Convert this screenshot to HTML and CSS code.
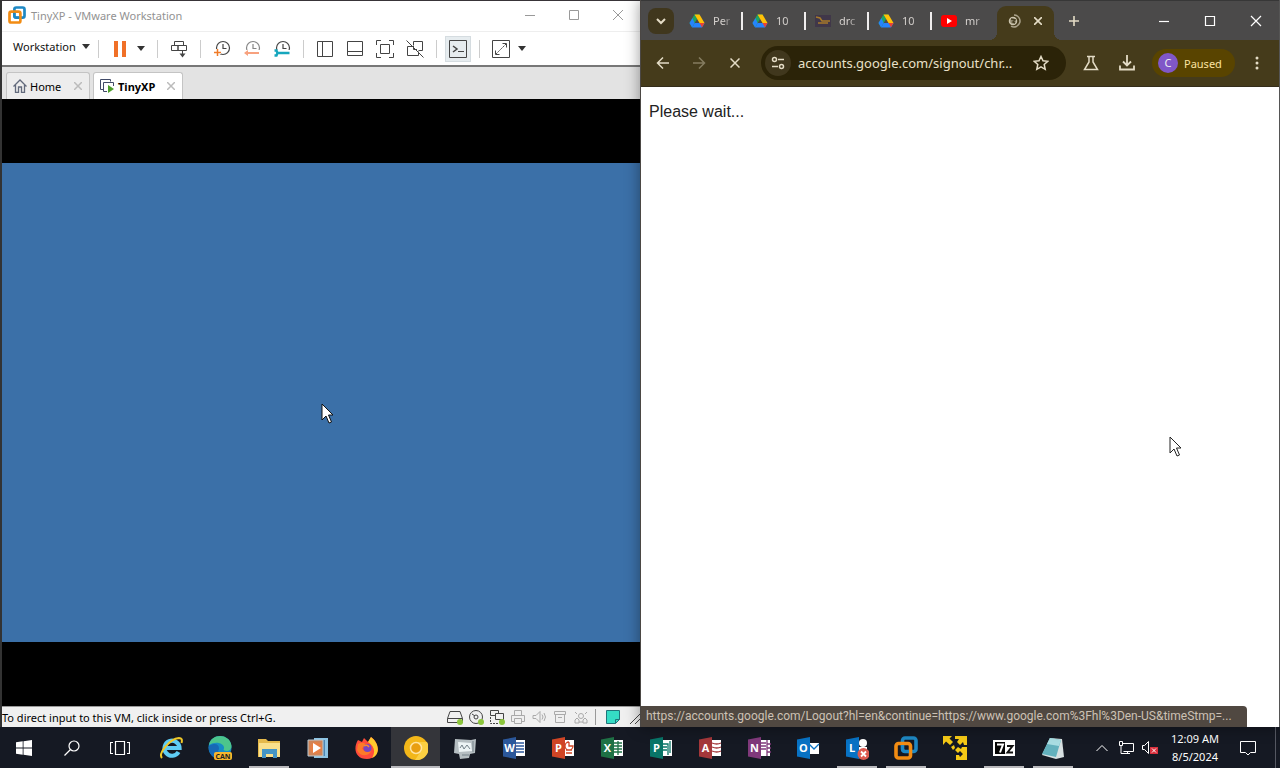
FILE: index.html
```html
<!DOCTYPE html>
<html lang="en">
<head>
<meta charset="utf-8">
<title>Desktop</title>
<link rel="stylesheet" href="styles.css">
</head>
<body>
<svg class="defs" aria-hidden="true">
  <symbol id="drive" viewBox="0 0 16 16"><path d="M5.500 1.500h5L8 6z" fill="#18a05a"/><path d="M5.500 1.500L.500 10l2.600 4.500L8 6z" fill="#1da463"/><path d="M10.500 1.500L15.500 10h-5L5.500 1.500z" fill="#ffc107"/><path d="M3.100 14.500L5.600 10h10l-2.600 4.500z" fill="#2684fc"/><path d="M.500 10l2.600 4.500L5.600 10 3.500 5z" fill="#2684fc"/><path d="M10.500 10h5L13 14.500z" fill="#ea4335"/></symbol>
  <symbol id="vmware" viewBox="0 0 24 24"><rect x="8.500" y="2" width="13.500" height="13.500" rx="2.500" fill="none" stroke="#1e88c4" stroke-width="3.600"/><rect x="2" y="7.500" width="14.500" height="14.500" rx="2.500" fill="none" stroke="#f28c13" stroke-width="3.600"/><path d="M8.500 9V13a2.500 2.500 0 0 0 2.500 2.500h4" fill="none" stroke="#1e88c4" stroke-width="3"/></symbol>
  <symbol id="clock" viewBox="0 0 18 18"><circle cx="10" cy="8" r="6.500" fill="none" stroke="currentColor" stroke-width="1.200"/><path d="M10 4v4.500h3.500" fill="none" stroke="currentColor" stroke-width="1.200"/></symbol>
  <symbol id="office-page" viewBox="0 0 24 24"><path d="M13 4h10v16H13z" fill="#fff"/></symbol>
  <symbol id="office-book" viewBox="0 0 24 24"><path d="M1 3.500L14 1v22L1 20.500z" fill="currentColor"/></symbol>
</svg>

<main class="desktop">
  <section class="window vm" aria-label="TinyXP - VMware Workstation">
    <header class="vm-title">
      <svg class="i18" viewBox="0 0 24 24"><use href="#vmware"/></svg>
      <h1>TinyXP - VMware Workstation</h1>
      <div class="caption">
        <button aria-label="Minimize"><svg class="i12" viewBox="0 0 12 12"><path d="M1 6.500h10"/></svg></button>
        <button aria-label="Maximize"><svg class="i12" viewBox="0 0 12 12"><path d="M1.500 1.500h9v9h-9z"/></svg></button>
        <button aria-label="Close"><svg class="i12" viewBox="0 0 12 12"><path d="M1 1l10 10M11 1L1 11"/></svg></button>
      </div>
    </header>
    <nav class="vm-tools">
      <button class="menu">Workstation <svg class="caret" viewBox="0 0 8 5"><path d="M0 0h8L4 5z"/></svg></button>
      <span class="sep"></span>
      <button class="tool" aria-label="Suspend"><svg class="i18" viewBox="0 0 18 18"><path d="M3 1h4v16H3zM11 1h4v16h-4z" fill="#f07028" stroke="none"/></svg></button>
      <button class="drop" aria-label="Power options"><svg class="caret" viewBox="0 0 8 5"><path d="M0 0h8L4 5z"/></svg></button>
      <span class="sep"></span>
      <button class="tool" aria-label="Send Ctrl+Alt+Del"><svg class="i18" viewBox="0 0 18 18"><path d="M4.500 5.500v-4h9v4M1.500 5.500h6.500v5h-6.500zM8 5.500h8.500v5H8zM12.500 10.500v4"/><path d="M9.500 13.500h6l-3 4z" fill="#444" stroke="none"/></svg></button>
      <span class="sep"></span>
      <button class="tool" aria-label="Take snapshot"><svg class="i18" viewBox="0 0 18 18"><use href="#clock"/><path d="M1 12.500h7M4.500 9v7" stroke="#fff" stroke-width="3"/><path d="M1 12.500h7M4.500 9v7" stroke="#ef7b28" stroke-width="1.500"/></svg></button>
      <button class="tool faded" aria-label="Revert snapshot"><svg class="i18" viewBox="0 0 18 18"><use href="#clock"/><path d="M1 13h16" stroke="#fff" stroke-width="6"/><path d="M5 10l-4 3 4 3v-2h11v-2H5z" fill="#f3703a" stroke="none"/></svg></button>
      <button class="tool" aria-label="Manage snapshots"><svg class="i18" viewBox="0 0 18 18"><use href="#clock"/><path d="M1 13h16" stroke="#fff" stroke-width="6"/><path d="M1.500 10.500h2l1 2.500-1 2.500h-2M4.500 13H16.500" stroke="#16a6bd" stroke-width="2.400"/></svg></button>
      <span class="sep"></span>
      <button class="tool" aria-label="Library"><svg class="i18" viewBox="0 0 18 18"><path d="M1.500 1.500h15v15h-15zM6.500 1.500v15"/></svg></button>
      <button class="tool" aria-label="Thumbnail bar"><svg class="i18" viewBox="0 0 18 18"><path d="M1.500 1.500h15v14h-15zM1.500 11.500h15"/></svg></button>
      <button class="tool" aria-label="Full screen"><svg class="i18" viewBox="0 0 18 18"><path d="M5 .500H.500V5M13 .500h4.500V5M5 17.500H.500V13M13 17.500h4.500V13M4.500 4.500h9v9h-9z"/></svg></button>
      <button class="tool" aria-label="Unity"><svg class="i18" viewBox="0 0 18 18"><path d="M7.500 5.500v-4h9v9h-4M6 6.500H1.500v9h11v-4M7.500 6v3.500H11M.500 .500l17 17"/></svg></button>
      <span class="sep"></span>
      <button class="tool" aria-label="Console view" aria-pressed="true"><svg class="i18" viewBox="0 0 18 18"><path d="M.500 .500h17v17H.500zM9 11.500h6"/><path d="M4 6l4 3-4 3" stroke-width="1.500"/></svg></button>
      <span class="sep"></span>
      <button class="tool" aria-label="Stretch guest"><svg class="i18" viewBox="0 0 18 18"><path d="M.500 .500h17v17H.500z"/><path d="M10.500 3.500h4v4M3.500 10.500v4h4"/><path d="M14 4L4 14" stroke-dasharray="2 1"/></svg></button>
      <button class="drop" aria-label="Stretch options"><svg class="caret" viewBox="0 0 8 5"><path d="M0 0h8L4 5z"/></svg></button>
    </nav>
    <div class="vm-tabs">
      <div class="vm-tab">
        <svg class="i14" viewBox="0 0 14 14"><path d="M.500 7.500L7 1l6.500 6.500M2.500 6v7.500h3V8h3v5.500h3V6" fill="none" stroke="#626a7c" stroke-width="1.300"/></svg>
        <a href="#home">Home</a>
        <button aria-label="Close Home"><svg class="i8" viewBox="0 0 8 8"><path d="M0 0l8 8M8 0L0 8"/></svg></button>
      </div>
      <div class="vm-tab current">
        <svg class="i14" viewBox="0 0 14 14"><path d="M3.500 10.500h-3V.500h10v2M13.500 7V3.500h-10v9H7" fill="none" stroke="#414a68"/><path d="M8 6l6 4-6 4z" fill="#4d9d2c"/></svg>
        <a href="#tinyxp">TinyXP</a>
        <button aria-label="Close TinyXP"><svg class="i8" viewBox="0 0 8 8"><path d="M0 0l8 8M8 0L0 8"/></svg></button>
      </div>
    </div>
    <div class="vm-view">
      <div class="guest"><svg class="pointer guest-pointer" viewBox="0 0 13 21"><path d="M1 1v16l4-4 3 7 2.500-1-3-7H12z" fill="#fff" stroke="#111"/></svg></div>
    </div>
    <footer class="vm-status">
      <span class="hint">To direct input to this VM, click inside or press Ctrl+G.</span>
      <svg class="i16" viewBox="0 0 16 16"><path d="M3 2.500h10l2.500 7v4H.500v-4zM.500 9.500h15"/><circle cx="13" cy="13" r="3" class="ok"/></svg>
      <svg class="i16" viewBox="0 0 16 16"><circle cx="8" cy="8" r="6.500"/><circle cx="8" cy="8" r="2"/><path d="M4 5l3 2"/><circle cx="13" cy="13" r="3" class="ok"/></svg>
      <svg class="i16" viewBox="0 0 16 16"><path d="M6.500 6.500h-5v-5h8v3M6.500 4.500h8v6h-8z"/><path d="M1.500 8v6.500H10" stroke-dasharray="2 1"/><circle cx="13" cy="13" r="3" class="ok"/></svg>
      <svg class="i16 off" viewBox="0 0 16 16"><path d="M4.500 6V1.500h7V6M4 12.500H1.500v-6h13v6H12M4.500 9.500h7v5h-7z"/></svg>
      <svg class="i16 off" viewBox="0 0 16 16"><path d="M2 6.500h3l4-4v11l-4-4H2zM11 5.500q2 2.500 0 5M13 4q3 4 0 8"/></svg>
      <svg class="i16 off" viewBox="0 0 16 16"><path d="M2.500 2.500h11v3h-11zM3.500 5.500v8h9v-8M6 8.500h4"/></svg>
      <svg class="i16 off" viewBox="0 0 16 16"><circle cx="8" cy="7" r="2.500"/><path d="M2 14v-3l2-2 2 2v3zM10 14v-3l2-2 2 2v3zM6 13h4M2 3l2 2M14 3l-2 2"/></svg>
      <span class="status-sep"></span>
      <svg class="i16" viewBox="0 0 16 16"><path d="M1.500 1.500h13v9l-4 4h-9z" fill="#35dcc5" stroke="#20747a"/><path d="M14.500 10.500h-4v4" stroke="#20747a"/></svg>
      <svg class="grip" viewBox="0 0 10 14"><path d="M0 14L10 4M5 14l5-5"/></svg>
    </footer>
  </section>

  <section class="window chrome" aria-label="Chrome">
    <header class="strip">
      <button class="tab-search" aria-label="Search tabs"><svg class="i10" viewBox="0 0 10 10"><path d="M1 3l4 4 4-4" stroke-width="2"/></svg></button>
      <a class="tab" href="#t1"><svg class="i16"><use href="#drive"/></svg><span>Per</span></a>
      <a class="tab" href="#t2"><svg class="i16"><use href="#drive"/></svg><span>10</span></a>
      <a class="tab" href="#t3"><svg class="i16" viewBox="0 0 16 16"><path d="M0 2h16v12H0z" fill="#403749"/><path d="M1 4l4 1 2 3h8M3 10h10" stroke="#a77a2a"/></svg><span>drc</span></a>
      <a class="tab" href="#t4"><svg class="i16"><use href="#drive"/></svg><span>10</span></a>
      <a class="tab" href="#t5"><svg class="i16" viewBox="0 0 16 16"><rect y="2" width="16" height="12" rx="3" fill="#f00" stroke="none"/><path d="M6 5l5 3-5 3z" fill="#fff" stroke="none"/></svg><span>mr</span></a>
      <div class="tab-active">
        <svg class="i14" viewBox="0 0 14 14"><path d="M7 1a6 6 0 1 1-3 11.200" stroke="#aaa28a" stroke-width="1.500"/><circle cx="6" cy="7" r="3.500" fill="#91896f" stroke="#cbc4ad"/><path d="M4 5l4 1-2 2 2 1" stroke="#443c20"/></svg>
        <button aria-label="Close tab"><svg class="i8" viewBox="0 0 8 8"><path d="M0 0l8 8M8 0L0 8" stroke-width="1.600"/></svg></button>
      </div>
      <button class="new-tab" aria-label="New tab"><svg class="i12" viewBox="0 0 12 12"><path d="M6 1v10M1 6h10" stroke-width="1.600"/></svg></button>
      <div class="caption">
        <button aria-label="Minimize"><svg class="i12" viewBox="0 0 12 12"><path d="M1 6.500h10"/></svg></button>
        <button aria-label="Maximize"><svg class="i12" viewBox="0 0 12 12"><path d="M1.500 1.500h9v9h-9z"/></svg></button>
        <button aria-label="Close"><svg class="i12" viewBox="0 0 12 12"><path d="M1 1l10 10M11 1L1 11"/></svg></button>
      </div>
    </header>
    <nav class="address-row">
      <button class="nav" aria-label="Back"><svg class="i14" viewBox="0 0 14 14"><path d="M13 7H1.500M7 1.500L1.500 7 7 12.500"/></svg></button>
      <button class="nav dim" aria-label="Forward"><svg class="i14" viewBox="0 0 14 14"><path d="M1 7h11.500M7 1.500L12.500 7 7 12.500"/></svg></button>
      <button class="nav" aria-label="Stop"><svg class="i10" viewBox="0 0 10 10"><path d="M.500 .500l9 9M9.500 .500l-9 9"/></svg></button>
      <div class="omnibox">
        <button class="site" aria-label="Site information"><svg class="i14" viewBox="0 0 14 14"><circle cx="3.500" cy="3.500" r="2"/><circle cx="10.500" cy="10.500" r="2"/><path d="M7 3.500h6M1 10.500h6"/></svg></button>
        <input aria-label="Address" value="accounts.google.com/signout/chr...">
        <button class="star" aria-label="Bookmark"><svg class="i16" viewBox="0 0 16 16"><path d="M8 1.500l2 4.300 4.800.500-3.600 3.200 1 4.800L8 11.900l-4.200 2.400 1-4.800L1.200 6.300 6 5.800z"/></svg></button>
      </div>
      <button class="nav" aria-label="Labs"><svg class="i16" viewBox="0 0 16 16"><path d="M4 1.500h8M6 1.500V7l-4.500 7.500h13L10 7V1.500"/></svg></button>
      <button class="nav" aria-label="Downloads"><svg class="i16" viewBox="0 0 16 16"><path d="M8 0v10M4 6.500l4 4 4-4M1 10.500v4h14v-4" stroke-width="1.800"/></svg></button>
      <button class="profile"><span class="avatar">C</span>Paused</button>
      <button class="dots" aria-label="Menu"><svg viewBox="0 0 4 16"><circle cx="2" cy="3" r="1.500"/><circle cx="2" cy="8" r="1.500"/><circle cx="2" cy="13" r="1.500"/></svg></button>
    </nav>
    <div class="page">
      <p>Please wait...</p>
      <svg class="pointer page-pointer" viewBox="0 0 13 21"><path d="M1 1v16l4-4 3 7 2.500-1-3-7H12z" fill="#fff" stroke="#222"/></svg>
      <div class="link-status">https://accounts.google.com/Logout?hl=en&amp;continue=https://www.google.com%3Fhl%3Den-US&amp;timeStmp=...</div>
    </div>
  </section>
</main>

<footer class="taskbar">
  <button class="sys" aria-label="Start"><svg class="i16" viewBox="0 0 16 16"><path d="M0 2.300l6.700-1v6.300H0zM7.500 1.200L16 0v7.600H7.500zM0 8.400h6.700v6.300L0 13.700zM7.500 8.400H16V16l-8.500-1.200z" fill="#fff"/></svg></button>
  <button class="sys" aria-label="Search"><svg class="i16" viewBox="0 0 16 16"><circle cx="10" cy="6" r="5"/><path d="M6.500 9.500L.500 15.500"/></svg></button>
  <button class="sys" aria-label="Task view"><svg class="i20" viewBox="0 0 20 20"><path d="M5.500 3.500h9v13h-9zM3 4.500H.500v11H3M17 4.500h2.500v11H17"/></svg></button>
  <div class="apps">
    <button aria-label="Internet Explorer"><svg class="i24" viewBox="0 0 24 24"><path d="M19.500 16a7.500 7.500 0 1 1 1-4H7" fill="none" stroke="#5fcdf5" stroke-width="4.200"/><path d="M3 22C-1 18 10 3 20 2q4 0 2.500 5" fill="none" stroke="#f0c929" stroke-width="2"/></svg></button>
    <button aria-label="Edge Canary"><svg class="i24" viewBox="0 0 24 24"><circle cx="12" cy="11.500" r="11.500" fill="#168cc6"/><path d="M1 9C3-3 22-3 23.500 10c0 5-5 6-8 4 3-6-7-10-14.500-5z" fill="#4cc58c"/><path d="M1 10c8-5 12 1 9 5 2 4 7 5 10 4-8 9-21 1-19-9z" fill="#1769b5"/><rect x="6" y="16" width="18" height="8" rx="2" fill="#f7b72c"/><text x="15" y="22.500" font-size="7" font-weight="700" text-anchor="middle" fill="#222">CAN</text></svg></button>
    <button class="open" aria-label="File Explorer"><svg class="i24" viewBox="0 0 24 24"><path d="M1 3h8l2 2h12v16H1z" fill="#e5b94b"/><path d="M2 7h21v14H2z" fill="#fae08c"/><path d="M5 13h15v9h-4v-4H9v4H5z" fill="#4595c5"/></svg></button>
    <button aria-label="Media player"><svg class="i24" viewBox="0 0 24 24"><path d="M8 2h14v20H8z" fill="#8cc4e4"/><path d="M18 4v16" stroke="#4f87b4" stroke-width="2"/><path d="M2 4h15v16H2z" fill="#cf8558" stroke="#b7c9d3"/><circle cx="10" cy="12" r="6" fill="#e67f45"/><path d="M7 7l8 5-8 5z" fill="#fff"/></svg></button>
    <button aria-label="Firefox"><svg class="i24" viewBox="0 0 24 24"><path d="M3 4l4 2 2-4 4 4 3-5c10 7 9 22-4 22C0 23-2 12 3 4z" fill="#ff4b3b"/><path d="M16 1c9 7 9 18 1 21 4-7 2-12-4-16z" fill="#ffca2d"/><path d="M3 8c5-3 8 0 9 2l-5 2c2 5 8 4 9 1 1 7-11 9-14 1z" fill="#fd7a29"/><circle cx="12.500" cy="12" r="4" fill="#7846c2"/><path d="M9 10q3-2 5 1" fill="none" stroke="#fd8b29" stroke-width="1.500"/></svg></button>
    <button class="open focused" aria-label="Chrome Canary"><svg class="i24" viewBox="0 0 24 24"><circle cx="12" cy="12" r="12" fill="#f3b719"/><path d="M12 6h11a12 12 0 0 1-12 18l6-9" fill="#fbcf42"/><path d="M2 6l5 9 5 9" fill="#de980b"/><circle cx="12" cy="12" r="5.500" fill="#e99f10" stroke="#ffe4a0" stroke-width="1.500"/></svg></button>
    <button aria-label="System tool"><svg class="i24" viewBox="0 0 24 24"><path d="M2 3l16 1 5-1-1 14-5 1-1 4-9 1-1-5-5-1z" fill="#b5bec2"/><path d="M5 6l13 1 1 8-13 1z" fill="#edf4f6"/><path d="M7 12l2-3 2 4 3-4 3 4M9 19h7M20 5v11" stroke="#74828a" fill="none"/></svg></button>
    <button class="word" aria-label="Word"><svg class="i24" viewBox="0 0 24 24"><use href="#office-page"/><path d="M14 7h8M14 10h8M14 13h8M14 16h8" class="ink"/><use href="#office-book"/><text x="7.500" y="16">W</text></svg></button>
    <button class="point" aria-label="PowerPoint"><svg class="i24" viewBox="0 0 24 24"><use href="#office-page"/><path d="M15 14h6M15 17h6M18 6v4h4a4 4 0 1 1-4-4" class="ink"/><use href="#office-book"/><text x="7.500" y="16">P</text></svg></button>
    <button class="excel" aria-label="Excel"><svg class="i24" viewBox="0 0 24 24"><use href="#office-page"/><path d="M14 7h8M14 10h8M14 13h8M14 16h8M18 5v14" class="ink"/><use href="#office-book"/><text x="7.500" y="16">X</text></svg></button>
    <button class="publish" aria-label="Publisher"><svg class="i24" viewBox="0 0 24 24"><use href="#office-page"/><path d="M14 8h5v11M21 5v12M14 11h4M14 14h4" class="ink"/><use href="#office-book"/><text x="7.500" y="16">P</text></svg></button>
    <button class="access" aria-label="Access"><svg class="i24" viewBox="0 0 24 24"><use href="#office-page"/><path d="M14 7q5 2 9 0M14 11q5 2 9 0M14 15q5 2 9 0" class="ink"/><use href="#office-book"/><text x="7.500" y="16">A</text></svg></button>
    <button class="note" aria-label="OneNote"><svg class="i24" viewBox="0 0 24 24"><use href="#office-page"/><path d="M20 4v16M20 8h4M20 12h4M20 16h4M14 7h5M14 10h5M14 13h5" class="ink"/><use href="#office-book"/><text x="7.500" y="16">N</text></svg></button>
    <button class="outlook" aria-label="Outlook"><svg class="i24" viewBox="0 0 24 24"><path d="M12 7h11v11H12z" fill="#fff"/><path d="M13 8l5 5 5-5" class="ink"/><use href="#office-book"/><text x="7.500" y="16">O</text></svg></button>
    <button class="lync open" aria-label="Lync"><svg class="i24" viewBox="0 0 24 24"><circle cx="18" cy="7" r="4" fill="#fff"/><path d="M13 11h9v6h-9z" fill="#fff"/><use href="#office-book"/><text x="7" y="16">L</text><circle cx="18.500" cy="18" r="6" fill="#dc5a50"/><path d="M16 15.500l5 5M21 15.500l-5 5" stroke="#fff" stroke-width="1.800"/></svg></button>
    <button class="open" aria-label="VMware Workstation"><svg class="i24"><use href="#vmware"/></svg></button>
    <button aria-label="Yellow arrows"><svg class="i24" viewBox="0 0 24 24"><path d="M0 0h9L6.500 2.500 10 6 7 9 3 5.500 0 9z" fill="#f6ca16"/><path d="M12 0h12v9h-3l-1-3-3 3-3-3 2-3h-4z" fill="#f6ca16"/><path d="M19 11h5v13H13v-5h3l1 2 3-3-3-3-2 2-3-3 3-3 3 2z" fill="#f6ca16"/><path d="M8 11l3-2 1 3-2 2z" fill="#f6ca16"/></svg></button>
    <button class="open" aria-label="7-Zip"><svg class="i24" viewBox="0 0 24 24"><path d="M1 4h22v16H1z" fill="#fff"/><path d="M3 6h10v12H3z" fill="#050505"/><path d="M15 10h5.500l-5 6.500H21" fill="none" stroke-width="2" class="zip"/><path d="M5 8.500h6l-3 8" stroke="#fff" stroke-width="2" fill="none"/></svg></button>
    <button class="open" aria-label="Notepad"><svg class="i24" viewBox="0 0 24 24"><path d="M9 2l12 1 2 18-8 2-14-4z" fill="#d7e0e1"/><path d="M9 2l11 2-5 17L1 18z" fill="#63b1bd"/><path d="M9 2l11 2-2 6L6 8z" fill="#a9dde2"/></svg></button>
  </div>
  <div class="tray">
    <button aria-label="Show hidden icons"><svg class="i12" viewBox="0 0 12 12"><path d="M.500 9L6 3.500 11.500 9"/></svg></button>
    <button aria-label="Network"><svg class="i16" viewBox="0 0 16 16"><path d="M5 3.500h10.500v8H5.500M1.500 1.500h3v4h-3zM3 5.500v8h9M9.500 11.500v2"/></svg></button>
    <button aria-label="Muted"><svg class="i16" viewBox="0 0 16 16"><path d="M.500 5.500h2l4-4v12l-4-4h-2z"/><path d="M8 7h8v7H8z" fill="#d9303d" stroke="none"/><path d="M10 8.500l4 4M14 8.500l-4 4"/></svg></button>
    <div class="time"><time datetime="2024-08-05T00:09">12:09 AM</time><span>8/5/2024</span></div>
    <button class="notify" aria-label="Notifications"><svg class="i16" viewBox="0 0 16 16"><path d="M.500 1.500h15v11h-5L8 15l-2.500-2.500h-5z"/></svg></button>
    <span class="show-desktop"></span>
  </div>
</footer>
</body>
</html>
```
FILE: styles.css
```css
* { box-sizing: border-box; }
body {
  margin: 0;
  min-height: 100vh;
  display: flex;
  flex-direction: column;
  font-family: "Noto Sans", "Open Sans", sans-serif;
  font-size: 12px;
  background: #000;
}
button {
  display: flex;
  align-items: center;
  justify-content: center;
  padding: 0;
  border: 0;
  background: none;
  color: inherit;
  font: inherit;
}
a { color: inherit; text-decoration: none; }
svg { display: block; flex: none; }
.defs { position: absolute; width: 0; height: 0; }
.i8 { width: 8px; height: 8px; }
.i10 { width: 10px; height: 10px; }
.i12 { width: 12px; height: 12px; }
.i14 { width: 14px; height: 14px; }
.i16 { width: 16px; height: 16px; }
.i18 { width: 18px; height: 18px; }
.i20 { width: 20px; height: 20px; }
.i24 { width: 24px; height: 24px; }

.desktop {
  flex: 1;
  display: grid;
  grid-template-columns: 1fr 1fr;
}
.window { display: flex; flex-direction: column; min-width: 0; }
.caption { display: flex; align-self: stretch; margin-left: auto; }
.caption button { width: 46px; }
.caption svg { fill: none; stroke: currentColor; }

/* VMware window */
.vm {
  background: #fff;
  border-left: 2px solid #333;
  border-top: 1px solid #383438;
}
.vm-title {
  display: flex;
  align-items: center;
  gap: 5px;
  height: 31px;
  padding-left: 6px;
  padding-bottom: 2px;
  border-bottom: 1px solid #eee;
  color: #929292;
}
.vm-title h1 { margin: 0; font-size: 11px; font-weight: 400; }
.vm-title .caption { color: #999; }
.vm-title .caption button { width: 44px; }
.vm-tools {
  display: flex;
  align-items: center;
  height: 35px;
  padding-left: 10px;
  border-bottom: 2px solid #777;
}
.vm-tools svg { fill: none; stroke: #444; color: #444; }
.vm-tools .caret, .caret { width: 8px; height: 5px; fill: #333; stroke: none; }
.menu { width: 80px; justify-content: space-between; font-size: 11px; padding: 0 2px 4px 1px; color: #111; }
.sep { width: 1px; height: 18px; margin: 0 6px; background: #ccc; }
.tool { width: 30px; height: 28px; }
.tool[aria-pressed="true"] { width: 26px; height: 26px; margin: 0 2px; background: #e6ecef; border: 1px solid #d5dce0; }
.faded { opacity: .65; }
.drop { width: 16px; justify-content: flex-start; padding-left: 2px; }
.vm-tabs {
  display: flex;
  align-items: flex-end;
  gap: 3px;
  height: 32px;
  padding-left: 4px;
  background: #e3e3e3;
}
.vm-tab {
  display: flex;
  align-items: center;
  gap: 3px;
  width: 84px;
  height: 27px;
  padding: 0 7px 0 6px;
  border: 1px solid #c4c4c4;
  border-bottom: 0;
  border-radius: 3px 3px 0 0;
  background: #ededed;
  font-size: 11px;
}
.vm-tab button { margin-left: auto; }
.vm-tab button svg { stroke: #bbb; stroke-width: 1.5; }
.vm-tab.current { width: 90px; gap: 4px; background: #fff; font-weight: 700; }
.vm-view {
  flex: 1;
  display: flex;
  align-items: center;
  background: #000;
}
.guest {
  position: relative;
  width: 100%;
  aspect-ratio: 4 / 3;
  background: #3b70a8;
}
.pointer { position: absolute; width: 13px; height: 21px; }
.guest-pointer { left: 50%; top: 50%; }
.vm-status {
  display: flex;
  align-items: center;
  gap: 5px;
  height: 21px;
  border-top: 1px solid #999;
  background: #f0f0f0;
  font-size: 11px;
}
.vm-status svg { fill: none; stroke: #444; }
.vm-status .off { stroke: #aaa; }
.vm-status .ok { fill: #8cc63c; stroke: none; }
.hint { flex: 1; white-space: nowrap; }
.status-sep { width: 1px; height: 16px; margin: 0 4px 0 1px; background: #999; }
.grip { width: 10px; height: 14px; margin-left: 4px; }

/* Browser window */
.chrome {
  position: relative;
  border-left: 1px solid #4b4744;
  border-right: 1px solid #555;
  background: #fff;
  box-shadow: 0 0 14px rgba(0, 0, 0, .4);
  color: #e4dcc6;
}
.strip {
  display: flex;
  align-items: center;
  height: 40px;
  padding-left: 7px;
  border-top: 1px solid #373737;
  background: #4b4a4a;
}
.strip svg, .address-row svg { fill: none; stroke: currentColor; stroke-width: 1.5; }
.strip .caption { color: #fff; }
.strip .caption svg { stroke-width: 1.2; }
.tab-search { width: 26px; height: 26px; margin-right: 6px; border-radius: 8px; background: #40371d; }
.tab {
  display: flex;
  align-items: center;
  gap: 8px;
  width: 63px;
  height: 18px;
  padding-left: 9px;
  border-right: 2px solid #f0eeee;
  font-size: 11px;
  color: #d5d1ce;
}
.tab:nth-of-type(5) { border-right-color: transparent; }
.tab svg { stroke: none; }
.tab span {
  white-space: nowrap;
  -webkit-mask-image: linear-gradient(90deg, #000 10px, transparent 20px);
  mask-image: linear-gradient(90deg, #000 10px, transparent 20px);
}
.tab-active {
  position: relative;
  display: flex;
  align-items: center;
  justify-content: space-between;
  align-self: flex-end;
  width: 57px;
  height: 34px;
  margin-left: 2px;
  padding: 0 12px 5px 10px;
  border-radius: 9px 9px 0 0;
  background: #453b1b;
}
.tab-active::before, .tab-active::after {
  content: "";
  position: absolute;
  bottom: 0;
  width: 8px;
  height: 8px;
}
.tab-active::before { right: 100%; background: radial-gradient(circle at 0 0, transparent 8px, #453b1b 8px); }
.tab-active::after { left: 100%; background: radial-gradient(circle at 100% 0, transparent 8px, #453b1b 8px); }
.new-tab { width: 40px; height: 28px; }
.address-row {
  display: flex;
  align-items: center;
  height: 47px;
  padding-left: 4px;
  border-bottom: 1px solid #342d1b;
  background: #453b1b;
}
.nav { width: 36px; height: 34px; }
.dim { opacity: .4; }
.omnibox {
  display: flex;
  align-items: center;
  flex: 1;
  min-width: 0;
  height: 34px;
  margin: 0 7px 0 8px;
  padding: 0 5px 0 4px;
  border-radius: 17px;
  background: #2b2308;
}
.omnibox input {
  flex: 1;
  min-width: 0;
  padding: 0 0 0 7px;
  border: 0;
  outline: 0;
  background: none;
  color: #e9e0c8;
  font: 13px "Noto Sans", sans-serif;
}
.site { width: 26px; height: 26px; border-radius: 50%; background: #40371d; }
.star { width: 40px; height: 26px; }
.profile {
  justify-content: flex-start;
  gap: 6px;
  width: 83px;
  height: 28px;
  margin-left: 7px;
  padding-left: 6px;
  border-radius: 14px;
  background: #594400;
  color: #fbe3a1;
  font-size: 11px;
}
.avatar { width: 20px; height: 20px; border-radius: 50%; background: #8057c8; color: #eee; font-size: 11px; line-height: 20px; }
.dots { width: 44px; height: 28px; }
.address-row .dots svg { width: 4px; height: 16px; fill: currentColor; stroke: none; }
.page {
  position: relative;
  flex: 1;
  padding: 16px 8px;
  color: #222;
  font: 16px/18px "Liberation Sans", Arial, sans-serif;
}
.page p { margin: 0; }
.page-pointer { left: 83%; top: 55%; margin: -3px 0 0 -2px; }
.link-status {
  position: absolute;
  left: 0;
  bottom: 0;
  width: 95%;
  height: 21px;
  padding-left: 5px;
  overflow: hidden;
  white-space: nowrap;
  border-radius: 0 4px 0 0;
  background: #504841;
  color: #cdc2b5;
  font: 12px/21px Roboto, "Noto Sans", sans-serif;
}

/* Taskbar */
.taskbar {
  display: flex;
  height: 41px;
  background: #151923;
  color: #fff;
}
.sys { width: 48px; }
.sys svg { fill: none; stroke: #fff; stroke-width: 1.2; }
.sys:first-child svg { stroke: none; }
.apps { display: flex; margin-left: 2px; }
.apps button { width: 49px; border-bottom: 2px solid transparent; border-top: 2px solid transparent; }
.apps .open {
  background: linear-gradient(#b9b9bd, #b9b9bd) center bottom / 40px 2px no-repeat;
  background-origin: border-box;
}
.apps .focused { background-color: #34353a; background-size: 49px 2px; }
.apps text { font-family: "Open Sans", sans-serif; }
.ink { fill: none; stroke: currentColor; stroke-width: 1.3; }
.zip { stroke: #111; }
.word text, .point text, .excel text, .publish text, .access text, .note text, .outlook text, .lync text {
  fill: #fff;
  font-size: 11px;
  font-weight: 700;
  text-anchor: middle;
}
.apps .word { color: #2b579a; }
.apps .point { color: #d04525; }
.apps .excel { color: #1e7145; }
.apps .publish { color: #087568; }
.apps .access { color: #a4373a; }
.apps .note { color: #80397b; }
.apps .outlook, .apps .lync { color: #0872c4; }
.tray { display: flex; margin-left: auto; padding-right: 4px; }
.tray button { width: 24px; }
.tray svg { fill: none; stroke: #fff; }
.time {
  display: flex;
  flex-direction: column;
  align-items: center;
  justify-content: center;
  width: 66px;
  font-size: 11px;
  line-height: 18px;
}
.tray .notify { width: 40px; margin-right: 7px; }
.show-desktop { width: 1px; background: #555862; }
```
